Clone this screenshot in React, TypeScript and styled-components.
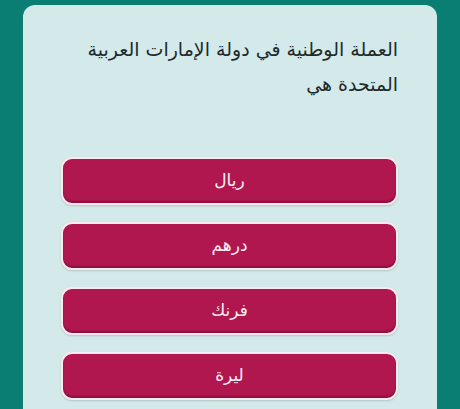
import React from "react";
import styled, { createGlobalStyle } from "styled-components";

const Global = createGlobalStyle`
  html, body { margin: 0; padding: 0; }
  body {
    background: #0a7e72;
    font-family: "DejaVu Sans", "Noto Sans", sans-serif;
    overflow: hidden;
  }
`;

const Page = styled.div`
  width: 460px;
  height: 409px;
  padding: 5px 23px 0 23px;
  box-sizing: border-box;
  overflow: hidden;
`;

const Card = styled.div`
  background: #d4e9ea;
  border-radius: 12px;
  height: 430px;
  padding: 27px 39px 0 38px;
  box-sizing: border-box;
  display: flex;
  flex-direction: column;
`;

const Question = styled.div`
  direction: rtl;
  text-align: right;
  color: #1f2a2a;
  font-size: 19px;
  line-height: 35px;
  height: 70px;
`;

const Answers = styled.div`
  margin-top: 55px;
  display: flex;
  flex-direction: column;
  gap: 17px;
`;

const Answer = styled.button`
  height: 48px;
  width: 100%;
  box-sizing: border-box;
  border: 2px solid #fbe9f0;
  border-radius: 11px;
  background: #b0174f;
  box-shadow: inset 0 -2px 2px rgba(70, 0, 30, 0.35), 0 1px 2px rgba(0, 0, 0, 0.15);
  color: #fbeef3;
  font-family: "DejaVu Sans", "Noto Sans", sans-serif;
  font-size: 17px;
  direction: rtl;
  display: flex;
  align-items: center;
  justify-content: center;
  padding: 0 0 2px 0;
`;

const answers = ["ريال", "درهم", "فرنك", "ليرة"];

export default function App() {
  return (
    <>
      <Global />
      <Page>
        <Card>
          <Question>العملة الوطنية في دولة الإمارات العربية المتحدة هي</Question>
          <Answers>
            {answers.map((a) => (
              <Answer key={a}>{a}</Answer>
            ))}
          </Answers>
        </Card>
      </Page>
    </>
  );
}
